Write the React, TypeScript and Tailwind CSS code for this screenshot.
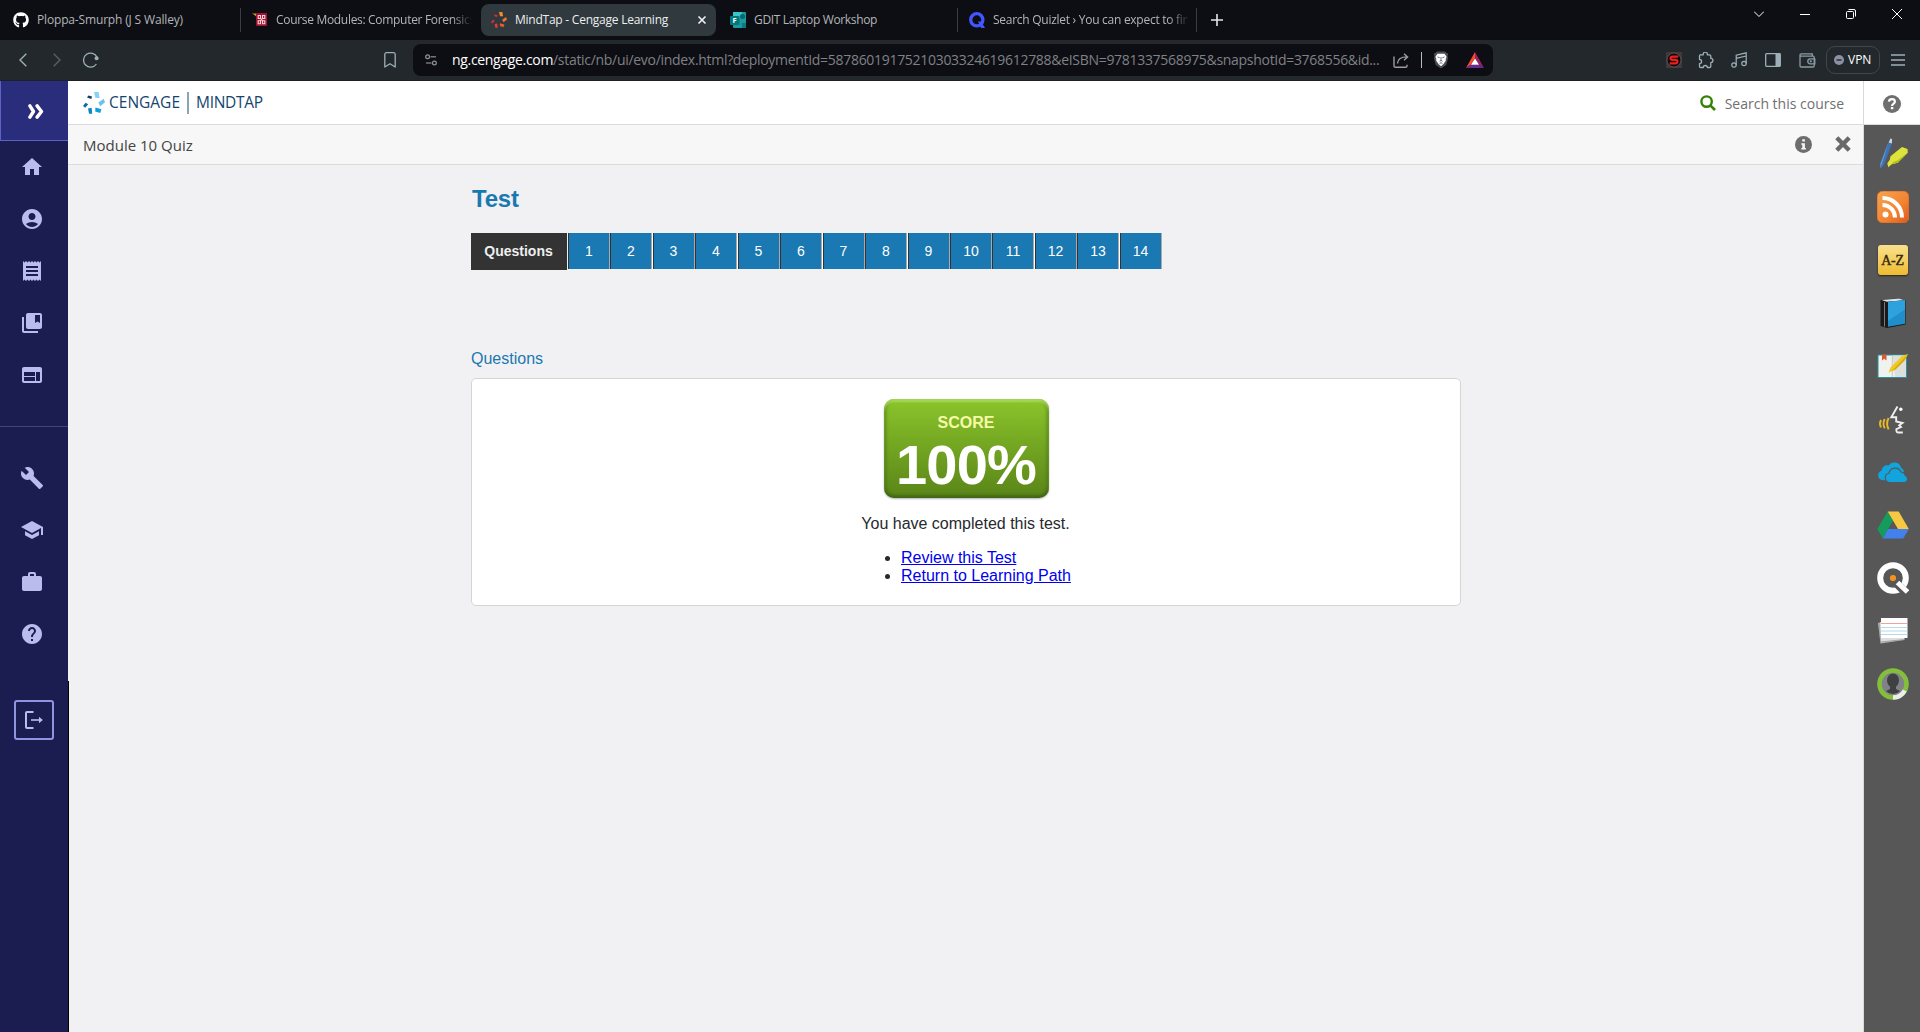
import type { ReactNode } from "react";
import {
  MdHome, MdAccountCircle, MdReceipt, MdCollectionsBookmark, MdWeb,
  MdBuild, MdSchool, MdWork, MdHelp,
} from "react-icons/md";
import { FaGithub } from "react-icons/fa";

const browserFont = "font-['Open_Sans',sans-serif]";
const arial = "font-['Liberation_Sans',Arial,sans-serif]";

function CengageMark({ colors, size }: { colors: string[]; size: number }) {
  return (
    <svg width={size} height={size} viewBox="0 0 22 22" className="shrink-0">
      <path d="M11 0h4.600l1 6h-4.200z" fill={colors[0]} />
      <path d="M15.400 10.600l5.200-3.800 1.400 3.400-4.800 4z" fill={colors[1]} />
      <path d="M12.400 15.600l6 1.600-1.200 3.800-5-1.600z" fill={colors[2]} />
      <path d="M5 16.600l3.600-.8.600 6H6z" fill={colors[3]} />
      <path d="M0 14l2.600-3.200 2.600 1.400-3 3.600z" fill={colors[4]} />
      <path d="M4 5.600l1.400-2 3.600 1-.6 2.400z" fill={colors[5]} />
    </svg>
  );
}

function TabDivider() {
  return <div className="h-6 w-px shrink-0 bg-[#3a3c42]" />;
}

function TabStrip() {
  return (
    <div className={`flex h-10 items-center bg-[#0d0e13] text-[12px] leading-4 text-[#b3b5b8] ${browserFont}`}>
      <div className="flex w-[240px] items-center pl-[13px]">
        <FaGithub size={16} className="shrink-0 text-white" />
        <span className="ml-2 whitespace-nowrap tracking-[-0.16px]">Ploppa-Smurph (J S Walley)</span>
      </div>
      <TabDivider />
      <div className="flex w-[240px] items-center pl-[11px]">
        <svg width="16" height="16" viewBox="0 0 16 16" className="shrink-0">
          <path d="M0 1.500h4.500v3.500L2.600 3z" fill="#d49a2a" />
          <rect x="4" y="1" width="11" height="13" rx="1" fill="#a3122f" />
          <path d="M6.200 3.500h2.300v3H6.200zM10.500 3.500h2.300v3h-2.300zM6.200 8.700h2.300v3H6.200zM10.500 8.700h2.300v3h-2.300zM8.500 6.500l2 2.200M10.500 6.500l-2 2.200" fill="none" stroke="#f4d7dc" strokeWidth="1.100" />
        </svg>
        <span className="ml-2 w-[196px] overflow-hidden whitespace-nowrap tracking-[-0.31px] [mask-image:linear-gradient(to_right,black_90%,transparent_100%)]">
          Course Modules: Computer Forensics
        </span>
      </div>
      <div className="flex h-8 w-[235px] items-center rounded-lg bg-[#30393d] pl-2.5 pr-[9px] text-[#eceef0]">
        <CengageMark size={16} colors={["#f58a2c", "#f0762f", "#ee5a30", "#e43d31", "#d92f33", "#d92f33"]} />
        <span className="ml-2 flex-1 whitespace-nowrap tracking-[-0.24px]">MindTap - Cengage Learning</span>
        <svg width="10" height="10" viewBox="0 0 10 10" className="shrink-0">
          <path d="M1.500 1.500l7 7M8.500 1.500l-7 7" stroke="#eceef0" strokeWidth="1.700" />
        </svg>
      </div>
      <div className="flex w-[241px] items-center pl-[14px]">
        <svg width="16" height="16" viewBox="0 0 16 16" className="shrink-0">
          <rect x="3" width="13" height="16" rx="1" fill="#1a9ba1" />
          <path d="M3 0h9v6H3z" fill="#36c5cc" />
          <path d="M12 11h4v4a1 1 0 0 1-1 1h-3z" fill="#117a7f" />
          <circle cx="12.500" cy="4.500" r="2.500" fill="#0c6368" />
          <rect y="4" width="9.500" height="9" rx="0.800" fill="#03787c" />
          <text x="2.400" y="11.200" fontSize="7.500" fontWeight="700" fill="#fff">F</text>
        </svg>
        <span className="ml-2 whitespace-nowrap tracking-[-0.34px]">GDIT Laptop Workshop</span>
      </div>
      <TabDivider />
      <div className="flex w-[238px] items-center pl-[11px]">
        <svg width="16" height="16" viewBox="0 0 16 16" className="shrink-0">
          <circle cx="7.800" cy="7.800" r="6.100" fill="none" stroke="#4255ff" strokeWidth="3.300" />
          <path d="M9 9.500h3.200L16 15.900h-4z" fill="#4255ff" />
        </svg>
        <span className="ml-2 w-[195px] overflow-hidden whitespace-nowrap tracking-[-0.27px] [mask-image:linear-gradient(to_right,black_90%,transparent_101%)]">
          Search Quizlet › You can expect to fin
        </span>
      </div>
      <TabDivider />
      <svg width="12" height="12" viewBox="0 0 12 12" className="ml-[14px]">
        <path d="M6 0v12M0 6h12" stroke="#e4e6e8" strokeWidth="1.600" />
      </svg>
      <div className="ml-auto flex h-7 items-center gap-9 self-start pr-[18px] text-white">
        <svg width="10" height="10" viewBox="0 0 10 10"><path d="M0 2.500l5 5 5-5" fill="none" stroke="currentColor" /></svg>
        <svg width="10" height="10" viewBox="0 0 10 10"><path d="M0 5.500h10" stroke="currentColor" /></svg>
        <svg width="10" height="10" viewBox="0 0 10 10">
          <rect x="0.500" y="2.500" width="7" height="7" rx="1" fill="none" stroke="currentColor" />
          <path d="M2.500 .5H8A1.500 1.500 0 0 1 9.500 2v5.500" fill="none" stroke="currentColor" />
        </svg>
        <svg width="10" height="10" viewBox="0 0 10 10"><path d="M0 0l10 10M10 0L0 10" stroke="currentColor" /></svg>
      </div>
    </div>
  );
}

function Toolbar() {
  return (
    <div className={`flex h-[41px] items-center border-b border-[#1c2125] bg-[#22282b] text-[#9db0b8] ${browserFont}`}>
      <svg width="8" height="14" viewBox="0 0 8 14" className="ml-[19px]" fill="none">
        <path d="M7.300 .7L1 7l6.300 6.300" stroke="currentColor" strokeWidth="1.400" />
      </svg>
      <svg width="8" height="14" viewBox="0 0 8 14" className="ml-[26px]" fill="none">
        <path d="M.7 .7L7 7 .7 13.300" stroke="#566067" strokeWidth="1.400" />
      </svg>
      <svg width="16" height="16" viewBox="0 0 16 16" className="ml-[22px]" fill="none">
        <path d="M13.400 12a7 7 0 1 1 .6-6.700" stroke="currentColor" strokeWidth="1.300" />
        <circle cx="13.600" cy="6.200" r="2" fill="currentColor" />
      </svg>
      <svg width="12" height="16" viewBox="0 0 12 16" className="ml-[285px]" fill="none">
        <path d="M2.500.7h7A1.600 1.600 0 0 1 11.200 2.300V15L6 11.800.8 15V2.300A1.600 1.600 0 0 1 2.500.7z" stroke="currentColor" strokeWidth="1.300" strokeLinejoin="round" />
      </svg>
      <div className="ml-[17px] flex h-8 w-[1080px] items-center rounded-lg bg-[#0d0e13] pl-3">
        <svg width="12" height="12" viewBox="0 0 12 12" fill="none" stroke="#8c9398" strokeWidth="1.200" className="shrink-0">
          <circle cx="2.600" cy="2.800" r="1.900" /><path d="M5.500 2.800H11" />
          <circle cx="9.400" cy="9" r="1.900" /><path d="M1 9h5.500" />
        </svg>
        <div className="ml-[15px] flex w-[929px] whitespace-nowrap text-[14px] leading-5">
          <span className="tracking-[-0.33px] text-white">ng.cengage.com</span>
          <span className="tracking-[-0.3px] text-[#7f8185]">
            /static/nb/ui/evo/index.html?deploymentId=58786019175210303324619612788&amp;eISBN=9781337568975&amp;snapshotId=3768556&amp;id...
          </span>
        </div>
        <svg width="16" height="15" viewBox="0 0 16 15" fill="none" stroke="#9a9ca0" strokeWidth="1.400" className="ml-3 shrink-0">
          <path d="M1 3.500V13a1.300 1.300 0 0 0 1.300 1.300h10.400A1.300 1.300 0 0 0 14 13v-1.200" />
          <path d="M4.500 10.500c.3-4.300 3-6.600 9.500-6.600M11 .7l3.600 3.200L11 7.200" />
        </svg>
        <div className="ml-3 h-4 w-px bg-[#b9bbbe]" />
        <svg width="16" height="18" viewBox="0 0 16 18" className="ml-[11px] shrink-0">
          <path d="M4 .5h8l1.500 1.500 1.700.5-.7 3 .7 1.500-2 7L8 17.600 2.800 14l-2-7 .7-1.500-.7-3L2.500 2z" fill="#4b4d5c" />
          <path d="M4.500 2.800h7l2.100 3-1 2.400.4 1L10.500 13 8 15.300 5.500 13 3 9.200l.4-1-1-2.400z" fill="#fff" />
          <path d="M4.500 6l2.200.7M11.500 6l-2.200.7M8 6v3.500M6.500 10.300L8 9.500l1.500.8M6.600 12.500L8 11.700l1.400.8" stroke="#4b4d5c" strokeWidth=".8" fill="none" />
        </svg>
        <svg width="18" height="16" viewBox="0 0 18 16" className="ml-[17px] shrink-0">
          <path d="M9 0v6L5 12.500 0 16z" fill="#ff4724" />
          <path d="M9 0l9 16-5-3.500L9 6z" fill="#9e1f63" />
          <path d="M0 16h18l-5-3.500H5z" fill="#662d91" />
          <path d="M9 6.200L13 12.800H5z" fill="#fff" />
        </svg>
      </div>
      <div className="ml-auto flex items-center">
        <svg width="16" height="16" viewBox="0 0 16 16" className="shrink-0">
          <rect width="16" height="16" fill="#40383a" />
          <circle cx="8" cy="8" r="7" fill="#0b0b0b" stroke="#6d6768" strokeWidth=".7" />
          <path d="M12.300 4.600H6.500Q4.600 4.600 4.600 6.200T6.500 7.900h3Q11.400 7.900 11.400 9.600T9.500 11.400H3.700" fill="none" stroke="#f01d1d" strokeWidth="2.200" />
        </svg>
        <svg width="17" height="17" viewBox="0 0 17 17" className="ml-[15px]" fill="none">
          <path d="M4 2.800h2.300a2.100 2.100 0 1 1 4 0h2.300a1.200 1.200 0 0 1 1.200 1.200v2.400a2.100 2.100 0 1 1 0 4.200V14.300a1.200 1.200 0 0 1-1.200 1.200h-2.300a2 2 0 0 0-4 0H3.700a1.200 1.200 0 0 1-1.200-1.200v-2.600a2.100 2.100 0 0 0 0-4.200V4A1.200 1.200 0 0 1 4 2.800z" stroke="currentColor" strokeWidth="1.300" strokeLinejoin="round" />
        </svg>
        <svg width="16" height="16" viewBox="0 0 16 16" className="ml-[17px]" fill="none" stroke="currentColor" strokeWidth="1.200">
          <path d="M5.200 13V3.200L15.200.8v10.700M5.200 6.400l10-2.400" />
          <circle cx="3" cy="13" r="2.200" /><circle cx="13" cy="11.500" r="2.200" />
        </svg>
        <svg width="16" height="14" viewBox="0 0 16 14" className="ml-[18px]">
          <rect x=".7" y=".7" width="14.600" height="12.600" rx=".8" fill="none" stroke="currentColor" strokeWidth="1.300" />
          <path d="M10.500 .7H15.300V13.300H10.500z" fill="currentColor" />
        </svg>
        <svg width="17" height="15" viewBox="0 0 17 15" className="ml-[18px]" fill="none" stroke="#8b9ca4" strokeWidth="1.300">
          <path d="M1 2A1.200 1.200 0 0 1 2.200.8H13.300V3.200M1 2v10.800A1.200 1.200 0 0 0 2.200 14H14a1.200 1.200 0 0 0 1.200-1.200V4.400A1.200 1.200 0 0 0 14 3.200H2.200A1.200 1.200 0 0 1 1 2z" />
          <path d="M15.800 5.800h-4.500a2.500 2.500 0 0 0 0 5h4.500z" /><circle cx="11.800" cy="8.300" r=".5" />
        </svg>
        <div className="ml-[10px] flex h-[28px] w-[54px] items-center rounded-[9px] border border-[#3d474c] pl-[7px] text-[12px] leading-4 text-white">
          <svg width="10" height="10" viewBox="0 0 10 10"><circle cx="5" cy="5" r="5" fill="#8d8fa3" /><path d="M2.500 5h5" stroke="#22282b" strokeWidth="1.400" /></svg>
          <span className="ml-1">VPN</span>
        </div>
        <svg width="14" height="12" viewBox="0 0 14 12" className="ml-[11px] mr-[15px]">
          <path d="M0 1h14M0 6h14M0 11h14" stroke="currentColor" strokeWidth="1.300" />
        </svg>
      </div>
    </div>
  );
}

function NavCell({ children }: { children: ReactNode }) {
  return <div className="flex h-[52px] w-full items-center pl-[20px] text-[#b9bcec]">{children}</div>;
}

function Sidebar() {
  return (
    <div className="z-10 flex w-[69px] shrink-0">
      <div className="flex w-[68px] flex-col bg-[#1b1c50]">
        <div className="flex h-[60px] items-center border-b border-l border-[#5c61c9] bg-[#2a2d7c] pl-[27px] pt-px">
          <svg width="16" height="15" viewBox="0 0 16 15" fill="none" stroke="#fff" strokeWidth="3.400" strokeLinejoin="round" strokeLinecap="round">
            <path d="M1.900 1.900l3.600 5.600-3.600 5.600M9.100 1.900l4.400 5.600-4.400 5.600" />
          </svg>
        </div>
        <div className="flex h-[286px] flex-col border-b border-[#41437a]">
          <NavCell><MdHome size={24} /></NavCell>
          <NavCell><MdAccountCircle size={24} /></NavCell>
          <NavCell><MdReceipt size={24} /></NavCell>
          <NavCell><MdCollectionsBookmark size={24} /></NavCell>
          <NavCell><MdWeb size={24} /></NavCell>
        </div>
        <div className="flex h-[259px] flex-col pt-[25px]">
          <NavCell><MdBuild size={24} /></NavCell>
          <NavCell><MdSchool size={24} /></NavCell>
          <NavCell><MdWork size={24} /></NavCell>
          <NavCell><MdHelp size={24} /></NavCell>
        </div>
        <div className="ml-[14px] mt-[14px] flex h-10 w-10 items-center justify-center rounded-[3px] border-2 border-[#9094e0] text-[#b9bcec]">
          <svg width="18" height="18" viewBox="0 0 18 18" fill="none" stroke="currentColor" strokeWidth="2">
            <path d="M8.500 1H2a1 1 0 0 0-1 1v14a1 1 0 0 0 1 1h6.500" />
            <path d="M6 9h9" strokeWidth="1.600" /><path d="M14 5.800L17.800 9 14 12.200z" fill="currentColor" stroke="none" />
          </svg>
        </div>
      </div>
      <div className="mt-[600px] w-px bg-black" />
    </div>
  );
}

const rail: ReactNode[] = [
  <svg key="pens" width="32" height="32" viewBox="0 0 32 32">
    <path d="M11.500 4l3.500 1.200-8 21.500-3.500 4-.3-5z" fill="#3c74b8" />
    <path d="M11.500 4L3.500 25.700 3.200 30.500l4.300-13z" fill="#6ba0d8" />
    <path d="M13.500.500l1.500.5-.1 4.500-3.200-1z" fill="#d5d7da" />
    <path d="M25 9l5.500 2 .3 3.800-10 10-6 1.500-3.500 3-1-4 2.500-3.500.7-3.500z" fill="#dde33b" />
    <path d="M30.800 14.500l-10 10.300-6 1.500 1.500-2.300 4-1.500z" fill="#b3be20" />
  </svg>,
  <svg key="rss" width="32" height="32" viewBox="0 0 32 32">
    <defs><linearGradient id="rss" x1="0" y1="0" x2="1" y2="1"><stop offset="0" stopColor="#f7a451" /><stop offset=".6" stopColor="#f28330" /><stop offset="1" stopColor="#dc571c" /></linearGradient></defs>
    <rect width="32" height="32" rx="6" fill="url(#rss)" stroke="#dd6a26" />
    <circle cx="8.500" cy="23.500" r="3" fill="#fff" />
    <path d="M5.500 14a12.500 12.500 0 0 1 12.500 12.500M5.500 7A19.500 19.500 0 0 1 25 26.500" fill="none" stroke="#fff" strokeWidth="4" />
  </svg>,
  <div key="az" className="mr-px flex h-[30px] w-[30px] items-center justify-center rounded-[3px] bg-linear-to-b from-[#f9e28b] to-[#eebb28] font-['Liberation_Serif',serif] text-[14px] tracking-[-0.2px] text-[#33290b] shadow-[0_1px_2px_rgba(0,0,0,0.6)] [-webkit-text-stroke:0.4px_#33290b]">A-Z</div>,
  <svg key="book" width="32" height="32" viewBox="0 0 32 32">
    <path d="M3.500 3L22 1.300l6.500 2.200v24L10 31l-6.500-2z" fill="#1a1a1c" />
    <path d="M4.500 3L22 1.500l5.500 1.700L10 4.700z" fill="#dfe3e6" />
    <path d="M11 4.800L28 3.300v23.500l-17 3z" fill="#208ecb" /><path d="M11 4.800L28 3.300v9L11 24z" fill="#2da2dc" />
    <path d="M7.500 5v24.500" stroke="#75797c" />
  </svg>,
  <svg key="notebook" width="32" height="32" viewBox="0 0 32 32">
    <path d="M1 5h28.500v22.500H1z" fill="#f0f2ef" stroke="#2f8f9f" />
    <path d="M15.300 5.500L18 27h11V5.500z" fill="#dcdfdc" /><path d="M15.300 5.500V27" stroke="#c4c8c5" />
    <path d="M5 4.500h4.500v6L7.200 8.700 5 10.500z" fill="#dd5931" />
    <path d="M25 6l6-2-3.500 6.500-9 9L15 21l-3.500 1.500 2-5z" fill="#f3c81e" /><path d="M31 4l-3.500 6.500-9 9L15 21z" fill="#d3a816" />
  </svg>,
  <svg key="speak" width="32" height="32" viewBox="0 0 32 32" fill="none">
    <path d="M20.500 3.500l-6.200 10.700h4.900v4.300l6.300 1.500-3.300 2.300 1.800 1.700-4.600 2.200q-.4 3.300 2 3.300h4.400" stroke="#efefef" strokeWidth="1.900" />
    <circle cx="23.800" cy="6.300" r="1.700" fill="#fff" />
    <path d="M4 17q-2 3.700 0 7.400M7.700 16q-2.400 4.700 0 9.400M11.600 15q-3 5.700 0 11.400" stroke="#e9b929" strokeWidth="1.900" />
  </svg>,
  <svg key="cloud" width="32" height="32" viewBox="0 0 32 32">
    <path d="M5 24a4.800 4.800 0 0 1-.5-9.300 5.500 5.500 0 0 1 7-5.200 7 7 0 0 1 12.500 2 6 6 0 0 1 3 4L15 25z" fill="#12a4dc" />
    <path d="M12.500 26.500a4.700 4.700 0 0 1-.5-9.300 6.300 6.300 0 0 1 12-1.200 5.400 5.400 0 0 1 4.500 3.500 3.800 3.800 0 0 1-.5 7z" fill="#12a4dc" stroke="#575757" strokeWidth="1.100" />
  </svg>,
  <svg key="drive" width="32" height="32" viewBox="0 0 32 32">
    <path d="M10.700 2.500L16 11.500 5.800 29.500 .3 20z" fill="#159b5b" />
    <path d="M10.700 2.500h11L31.800 20H21z" fill="#f7c943" />
    <path d="M11 20h20.800l-5.500 9.500H5.800z" fill="#4280ec" />
  </svg>,
  <svg key="q" width="32" height="32" viewBox="0 0 32 32">
    <circle cx="16" cy="16" r="12.800" fill="none" stroke="#fff" strokeWidth="6" />
    <path d="M17.500 19.500L30 32" stroke="#575757" strokeWidth="8" />
    <path d="M20.500 20.500L30.500 30" stroke="#fff" strokeWidth="5" />
    <circle cx="16" cy="16" r="3.100" fill="#f7931d" />
  </svg>,
  <svg key="cards" width="32" height="32" viewBox="0 0 32 32">
    <path d="M1 8L24 6l3.500 19-24 3.500z" fill="#bcbcbc" /><path d="M2.500 7h25v17.500L3.500 27z" fill="#dedede" stroke="#777" strokeWidth=".5" />
    <path d="M4 3h26.500v20H4z" fill="#fff" />
    <path d="M4 8.500h26.500" stroke="#f2a1a1" /><path d="M4 12.500h26.500M4 16h26.500M4 19.500h26.500" stroke="#b4dbea" />
  </svg>,
  <svg key="avatar" width="32" height="32" viewBox="0 0 32 32">
    <circle cx="16" cy="16" r="13.500" fill="#808287" stroke="#84bf3b" strokeWidth="4.600" />
    <path d="M27.800 22.500A13.500 13.500 0 0 1 16 29.500" fill="none" stroke="#ededed" strokeWidth="4.600" />
    <ellipse cx="16" cy="12.500" rx="6" ry="7" fill="#3f4042" /><path d="M13 16h6v5l4 2a9.500 9.500 0 0 1-14 0l4-2z" fill="#3f4042" />
  </svg>,
];

function ToolRail() {
  return (
    <div className="flex w-[57px] shrink-0 flex-col border-l border-[#d9d9d9] bg-[#575757]">
      <div className="flex h-[44px] items-center justify-center border-b border-[#dcdcdc] bg-white">
        <svg width="18" height="18" viewBox="0 0 18 18" className="mt-[3px]">
          <circle cx="9" cy="9" r="9" fill="#6f6f6f" />
          <path d="M5.900 6.700Q6.200 4.200 9 4.200t2.900 2.400Q11.900 8 10.400 8.900 9.100 9.700 9.100 11" fill="none" stroke="#fff" strokeWidth="2.200" />
          <rect x="7.900" y="12" width="2.400" height="2.200" fill="#fff" />
        </svg>
      </div>
      <div className="flex flex-col pt-[2.700px]">
        {rail.map((icon, i) => (
          <div key={i} className="flex h-[52.95px] items-center justify-center pl-0.5">{icon}</div>
        ))}
      </div>
    </div>
  );
}

const questions = [1, 2, 3, 4, 5, 6, 7, 8, 9, 10, 11, 12, 13, 14];
// Cells preceded by a one-pixel white gutter.
const gapBefore = [3, 5, 7, 9, 12, 14];

function QuestionBar() {
  return (
    <div className="flex items-start text-[14px] text-white">
      <div className="mr-px flex h-[37px] w-[96px] items-center justify-center bg-[#333] pr-px font-bold text-[#eee]">Questions</div>
      {questions.map((n) => (
        <div
          key={n}
          className={`flex h-9 items-center justify-center border-l border-r border-r-[#aaa] bg-[#1a78b2] ${
            gapBefore.includes(n) ? "w-[43px] border-l-white shadow-[inset_1px_0_0_#333]" : "w-[42px] border-l-[#333]"
          }`}
        >
          {n}
        </div>
      ))}
    </div>
  );
}

function ScoreBadge() {
  return (
    <div className="mx-auto flex h-[99px] w-[165px] flex-col items-center rounded-[10px] bg-linear-to-b from-[#8bc52b] to-[#5a8518] font-bold shadow-[inset_0_3px_2px_rgba(190,235,120,0.6),inset_0_-3px_3px_rgba(50,80,20,0.5),inset_3px_0_3px_rgba(60,95,20,0.3),inset_-3px_0_3px_rgba(60,95,20,0.3),0_1px_2px_rgba(0,0,0,0.3)]">
      <span className="mt-[15px] text-[16px] leading-[18px] text-[#f5fba6]">SCORE</span>
      <span className="mt-px text-[56px] leading-[64px] tracking-[-0.8px] text-white">100%</span>
    </div>
  );
}

function Content() {
  return (
    <div className={`flex-1 bg-[#f1f1f4] ${arial}`}>
      <div className="ml-[403px] w-[990px] pt-5">
        <h1 className="pl-px text-[24px] font-bold leading-7 tracking-[-0.2px] text-[#1a78b0]">Test</h1>
        <div className="mt-5"><QuestionBar /></div>
        <h2 className="mt-[80px] text-[16px] leading-[18px] text-[#1a78b0]">Questions</h2>
        <div className="mt-[10px] h-[228px] rounded-[5px] border border-[#d5d5d6] bg-white pt-5 text-[16px] leading-[18px] text-[#262a2e]">
          <ScoreBadge />
          <p className="mt-[17px] pr-px text-center">You have completed this test.</p>
          <ul className="ml-[429px] mt-4 list-disc text-[#262a2e]">
            <li><a className="text-[#0000ee] underline">Review this Test</a></li>
            <li><a className="text-[#0000ee] underline">Return to Learning Path</a></li>
          </ul>
        </div>
      </div>
    </div>
  );
}

export default function App() {
  return (
    <div className="flex h-[1032px] w-[1920px] flex-col overflow-hidden">
      <TabStrip />
      <Toolbar />
      <div className="flex flex-1 bg-[#f1f1f4]">
        <Sidebar />
        <div className="-ml-px flex flex-1 flex-col">
          <header className={`flex h-[44px] items-center border-b border-[#dcdcdc] bg-white pl-[15px] pr-[19px] ${browserFont}`}>
            <CengageMark size={22} colors={["#87d3f4", "#6cc2ea", "#0d9fdb", "#0a86c8", "#0d6aa5", "#123f6b"]} />
            <span className="ml-1 pb-0.5 text-[15.500px] leading-5 text-[#14456e]">CENGAGE</span>
            <div className="ml-[7px] h-[22px] w-[2px] bg-[#8aa4b8]" />
            <span className="ml-[7px] pb-0.5 text-[15.500px] leading-5 tracking-[-0.3px] text-[#14456e]">MINDTAP</span>
            <svg width="16" height="16" viewBox="0 0 16 16" className="ml-auto" fill="none" stroke="#358100">
              <circle cx="6.600" cy="6.600" r="5.200" strokeWidth="2.400" /><path d="M10.300 10.300l4.700 4.700" strokeWidth="2.600" />
            </svg>
            <span className="ml-[9px] pt-[2px] text-[14px] leading-5 text-[#707070]">Search this course</span>
          </header>
          <div className={`flex h-[40px] items-center border-b border-[#dcdcdc] bg-[#f7f7f7] pl-[15px] pr-3 ${browserFont}`}>
            <span className="pt-px text-[15px] leading-5 text-[#444]">Module 10 Quiz</span>
            <svg width="17" height="17" viewBox="0 0 17 17" className="mb-px ml-auto">
              <circle cx="8.500" cy="8.500" r="8.500" fill="#6d6d6d" />
              <path d="M7.300 3.300h2.600v2.300H7.300zM6.300 7.200h3.600v4.700h1v1.600H6.300v-1.600h1V8.800h-1z" fill="#f7f7f7" />
            </svg>
            <svg width="16" height="16" viewBox="0 0 16 16" className="mb-px ml-[23px]">
              <path d="M1.800 1.800l12.400 12.400M14.200 1.800L1.800 14.200" stroke="#696969" strokeWidth="4.400" />
            </svg>
          </div>
          <Content />
        </div>
        <ToolRail />
      </div>
    </div>
  );
}
